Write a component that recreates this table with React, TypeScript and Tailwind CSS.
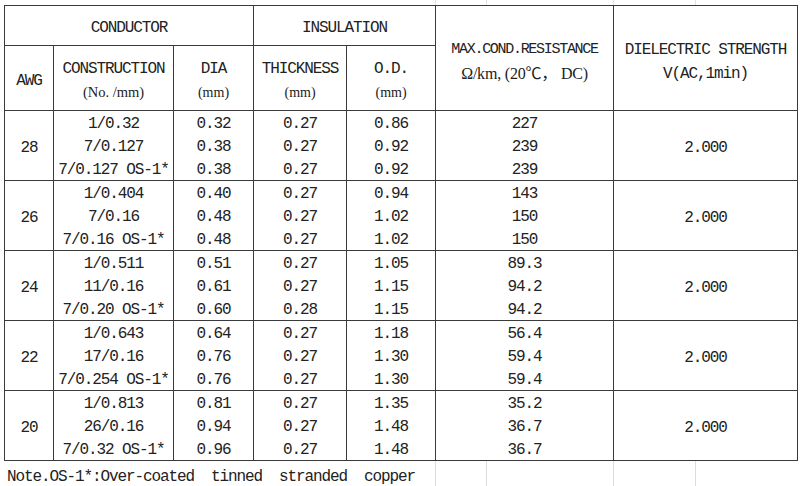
const groups = [
  {
    awg: "28",
    rows: [
      ["1/0.32", "0.32", "0.27", "0.86", "227"],
      ["7/0.127", "0.38", "0.27", "0.92", "239"],
      ["7/0.127 OS-1*", "0.38", "0.27", "0.92", "239"],
    ],
  },
  {
    awg: "26",
    rows: [
      ["1/0.404", "0.40", "0.27", "0.94", "143"],
      ["7/0.16", "0.48", "0.27", "1.02", "150"],
      ["7/0.16 OS-1*", "0.48", "0.27", "1.02", "150"],
    ],
  },
  {
    awg: "24",
    rows: [
      ["1/0.511", "0.51", "0.27", "1.05", "89.3"],
      ["11/0.16", "0.61", "0.27", "1.15", "94.2"],
      ["7/0.20 OS-1*", "0.60", "0.28", "1.15", "94.2"],
    ],
  },
  {
    awg: "22",
    rows: [
      ["1/0.643", "0.64", "0.27", "1.18", "56.4"],
      ["17/0.16", "0.76", "0.27", "1.30", "59.4"],
      ["7/0.254 OS-1*", "0.76", "0.27", "1.30", "59.4"],
    ],
  },
  {
    awg: "20",
    rows: [
      ["1/0.813", "0.81", "0.27", "1.35", "35.2"],
      ["26/0.16", "0.94", "0.27", "1.48", "36.7"],
      ["7/0.32 OS-1*", "0.96", "0.27", "1.48", "36.7"],
    ],
  },
];

const cell = "border border-[#3a3a3a] p-0 text-center align-middle";

function Stack({ items }: { items: string[] }) {
  return (
    <div className="flex flex-col">
      {items.map((t, i) => (
        <div key={i} className="h-[23px] leading-[27px] whitespace-pre">
          {t}
        </div>
      ))}
    </div>
  );
}

export default function App() {
  return (
    <div className="w-[800px] h-[486px] bg-white overflow-hidden text-[16px] tracking-[-1.1px] text-[#222] font-['Liberation_Mono','Noto_Sans_CJK_SC',monospace]">
      {/* faint sheet gridlines above the table */}
      <div className="h-[5px] relative">
        <div className="absolute left-[435px] top-0 h-full w-px bg-[#e2e2e2]" />
        <div className="absolute left-[486px] top-0 h-full w-px bg-[#e2e2e2]" />
        <div className="absolute left-[613px] top-0 h-full w-px bg-[#e2e2e2]" />
        <div className="absolute left-[695px] top-0 h-full w-px bg-[#e2e2e2]" />
      </div>

      <div className="pl-[4px]">
        <table className="border-collapse table-fixed w-[793px]">
          <colgroup>
            <col className="w-[49px]" />
            <col className="w-[120px]" />
            <col className="w-[80px]" />
            <col className="w-[93px]" />
            <col className="w-[89px]" />
            <col className="w-[178px]" />
            <col className="w-[184px]" />
          </colgroup>
          <thead>
            <tr className="h-[40px]">
              <td colSpan={3} className={`${cell} pt-[4px]`}>
                CONDUCTOR
              </td>
              <td colSpan={2} className={`${cell} pt-[4px]`}>
                INSULATION
              </td>
              <td rowSpan={2} className={cell}>
                <div className="text-[15px] tracking-[-1.3px] leading-[24px] pt-[7px]">MAX.COND.RESISTANCE</div>
                <div className="leading-[24px] text-[16px] tracking-[-0.2px] font-['Liberation_Serif','Noto_Sans_CJK_SC',serif] whitespace-pre">
                  Ω/km, (20℃， DC)
                </div>
              </td>
              <td rowSpan={2} className={cell}>
                <div className="leading-[24px] pt-[7px]">DIELECTRIC STRENGTH</div>
                <div className="leading-[24px]">V(AC,1min)</div>
              </td>
            </tr>
            <tr className="h-[65px]">
              <td className={`${cell} pt-[5px]`}>AWG</td>
              <td className={cell}>
                <div className="leading-[23px] pt-[6px]">CONSTRUCTION</div>
                <div className="leading-[23px] text-[14.5px] tracking-normal font-['Liberation_Serif',serif]">(No. /mm)</div>
              </td>
              <td className={cell}>
                <div className="leading-[23px] pt-[6px]">DIA</div>
                <div className="leading-[23px] text-[14px] tracking-normal font-['Liberation_Serif',serif]">(mm)</div>
              </td>
              <td className={cell}>
                <div className="leading-[23px] pt-[6px]">THICKNESS</div>
                <div className="leading-[23px] text-[14px] tracking-normal font-['Liberation_Serif',serif]">(mm)</div>
              </td>
              <td className={cell}>
                <div className="leading-[23px] pt-[6px]">O.D.</div>
                <div className="leading-[23px] text-[14px] tracking-normal font-['Liberation_Serif',serif]">(mm)</div>
              </td>
            </tr>
          </thead>
          <tbody>
            {groups.map((g) => (
              <tr key={g.awg} className="h-[69px]">
                <td className={`${cell} pt-[5px]`}>{g.awg}</td>
                {[0, 1, 2, 3, 4].map((c) => (
                  <td key={c} className={cell}>
                    <Stack items={g.rows.map((r) => r[c])} />
                  </td>
                ))}
                <td className={`${cell} pt-[5px]`}>2.000</td>
              </tr>
            ))}
          </tbody>
        </table>
      </div>

      {/* note row with faint gridlines */}
      <div className="relative h-[30px]">
        <div className="pl-[7px] pt-[4px] leading-[24px] whitespace-pre">
          Note.OS-1*:Over-coated  tinned  stranded  copper
        </div>
        <div className="absolute left-[435px] top-0 h-full w-px bg-[#dcdcdc]" />
        <div className="absolute left-[486px] top-0 h-full w-px bg-[#dcdcdc]" />
        <div className="absolute left-[613px] top-0 h-full w-px bg-[#dcdcdc]" />
        <div className="absolute left-[695px] top-0 h-full w-px bg-[#dcdcdc]" />
      </div>
    </div>
  );
}
